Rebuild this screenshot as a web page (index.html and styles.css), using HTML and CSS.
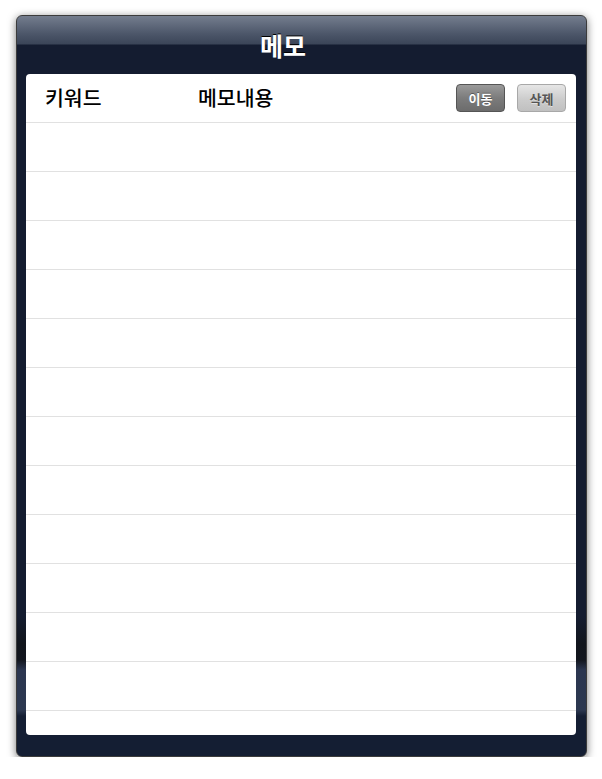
FILE: index.html
```html
<!DOCTYPE html>
<html lang="ko">
<head>
<meta charset="utf-8">
<title>메모</title>
<link rel="stylesheet" href="styles.css">
</head>
<body>
<div class="frame">
  <div class="titlebar"><h1 class="title">메모</h1></div>
  <div class="panel">
    <div class="head-row">
      <span class="col-key">키워드</span>
      <span class="col-memo">메모내용</span>
      <div class="actions">
        <button class="btn btn-dark">이동</button>
        <button class="btn btn-light">삭제</button>
      </div>
    </div>
    <div class="row"></div>
    <div class="row"></div>
    <div class="row"></div>
    <div class="row"></div>
    <div class="row"></div>
    <div class="row"></div>
    <div class="row"></div>
    <div class="row"></div>
    <div class="row"></div>
    <div class="row"></div>
    <div class="row"></div>
    <div class="row"></div>
    <div class="row"></div>
  </div>
</div>
</body>
</html>
```

FILE: styles.css
```css
html, body {
  margin: 0;
  padding: 0;
  background: #ffffff;
}
body {
  font-family: "Noto Sans CJK KR", "Noto Sans", sans-serif;
  padding: 15px 0 0 16px;
}
.frame {
  box-sizing: border-box;
  width: 571px;
  height: 742px;
  border: 1px solid #3c3c3c;
  border-radius: 6px;
  box-shadow: 0 2px 9px rgba(0, 0, 0, 0.55);
  background: linear-gradient(to bottom,
    #747d8e 0px, #4c5669 18px, #3b4558 28px,
    #141c30 29px, #141c30 600px,
    #11151c 628px, #12161e 644px,
    #2b3650 654px, #2c3850 694px,
    #141e33 700px, #141e33 100%);
  display: flex;
  flex-direction: column;
  padding: 0 10px 21px 9px;
  overflow: hidden;
}
.titlebar {
  height: 58px;
  display: flex;
  align-items: center;
  justify-content: center;
  flex: none;
}
.title {
  margin: 0 36px 0 0;
  color: #ffffff;
  font-size: 25px;
  font-weight: 700;
  text-shadow: 0 -1px 0 #000000;
  line-height: 1;
}
.panel {
  flex: 1;
  background: #ffffff;
  border-radius: 4px;
  overflow: hidden;
}
.head-row {
  box-sizing: border-box;
  height: 49px;
  border-bottom: 1px solid #e1e1e1;
  display: flex;
  align-items: center;
  padding: 0 10px 0 19px;
}
.col-key, .col-memo {
  font-size: 20.5px;
  font-weight: 500;
  color: #000000;
  line-height: 1;
  padding-bottom: 1px;
}
.col-key {
  width: 153px;
}
.actions {
  margin-left: auto;
  display: flex;
  gap: 12px;
}
.btn {
  box-sizing: border-box;
  width: 49px;
  height: 28px;
  border-radius: 4px;
  font-family: "Noto Sans CJK KR", "Noto Sans", sans-serif;
  font-size: 13px;
  font-weight: 700;
  padding: 0;
  display: flex;
  align-items: center;
  justify-content: center;
}
.btn-dark {
  color: #ffffff;
  border: 1px solid #555555;
  background: linear-gradient(to bottom, #9a9a9a 0%, #7c7c7c 50%, #6c6c6c 100%);
  text-shadow: 0 -1px 0 rgba(0, 0, 0, 0.35);
}
.btn-light {
  color: #555555;
  border: 1px solid #a8a8a8;
  background: linear-gradient(to bottom, #e6e6e6 0%, #cccccc 55%, #c0c0c0 100%);
  text-shadow: 0 1px 0 rgba(255, 255, 255, 0.5);
}
.row {
  box-sizing: border-box;
  height: 49px;
  border-bottom: 1px solid #e1e1e1;
}
```
